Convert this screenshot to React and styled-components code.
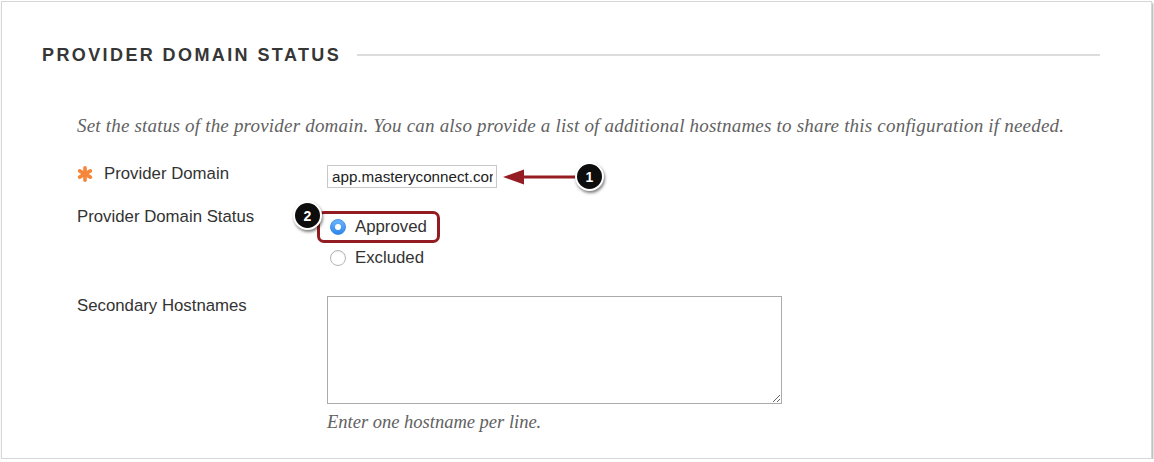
import React from 'react';
import styled, { createGlobalStyle } from 'styled-components';

const App = () => {
  return (
    <>
      <GlobalStyle />
      <Panel>
        <HeadingRow>
          <Heading>Provider Domain Status</Heading>
          <Rule />
        </HeadingRow>

        <Intro>
          Set the status of the provider domain. You can also provide a list of additional hostnames to share this configuration if needed.
        </Intro>

        <Form>
          <Row>
            <Label>
              <Asterisk viewBox="0 0 16 16">
                <g stroke="#f5863a" strokeWidth="3.6" strokeLinecap="round">
                  <line x1="8" y1="1.8" x2="8" y2="14.2" />
                  <line x1="2.6" y1="4.9" x2="13.4" y2="11.1" />
                  <line x1="2.6" y1="11.1" x2="13.4" y2="4.9" />
                </g>
              </Asterisk>
              Provider Domain
            </Label>
            <Control>
              <FieldWrap>
                <TextInput type="text" defaultValue="app.masteryconnect.com" />
                <Pointer>
                  <svg width="76" height="18" viewBox="0 0 76 18">
                    <polygon points="0,9 21,1.5 21,16.5" fill="#951c22" />
                    <rect x="19" y="7.5" width="57" height="3" fill="#951c22" />
                  </svg>
                  <Badge>1</Badge>
                </Pointer>
              </FieldWrap>
            </Control>
          </Row>

          <Row $gap={19}>
            <Label>Provider Domain Status</Label>
            <RadioGroup>
              <Option>
                <Radio $checked />
                Approved
                <Highlight>
                  <Badge $floating>2</Badge>
                </Highlight>
              </Option>
              <Option>
                <Radio />
                Excluded
              </Option>
            </RadioGroup>
          </Row>

          <Row $gap={28}>
            <Label>Secondary Hostnames</Label>
            <Control>
              <TextArea />
              <Hint>Enter one hostname per line.</Hint>
            </Control>
          </Row>
        </Form>
      </Panel>
    </>
  );
};

const GlobalStyle = createGlobalStyle`
  html, body {
    margin: 0;
    padding: 0;
    background: #ffffff;
    font-family: 'Liberation Sans', Arial, sans-serif;
    color: #333333;
  }
`;

const Panel = styled.section`
  box-sizing: border-box;
  width: 1151px;
  height: 458px;
  margin: 1px 0 0 1px;
  padding: 41px 51px 0 40px;
  background: #ffffff;
  border: 1px solid #d6d6d6;
  box-shadow: 1px 2px 2px rgba(0, 0, 0, 0.35);
`;

const HeadingRow = styled.div`
  display: flex;
  align-items: center;
  height: 24px;
`;

const Heading = styled.h2`
  margin: 0;
  font-size: 18px;
  font-weight: bold;
  letter-spacing: 2.4px;
  text-transform: uppercase;
  color: #363636;
  line-height: 24px;
  white-space: nowrap;
`;

const Rule = styled.div`
  flex: 1;
  height: 2px;
  margin-left: 16px;
  background: #dcdcdc;
`;

const Intro = styled.p`
  margin: 47px 0 0;
  padding-left: 35px;
  font-family: 'Liberation Serif', Georgia, serif;
  font-style: italic;
  font-size: 19px;
  letter-spacing: 0.2px;
  line-height: 24px;
  color: #626262;
  white-space: nowrap;
`;

const Form = styled.div`
  margin-top: 26px;
  padding-left: 35px;
`;

const Row = styled.div`
  display: grid;
  grid-template-columns: 250px 1fr;
  margin-top: ${(p) => p.$gap || 0}px;
`;

const Label = styled.div`
  display: flex;
  align-items: center;
  height: 20px;
  font-size: 16.8px;
  color: #333333;
`;

const Asterisk = styled.svg`
  width: 16px;
  height: 16px;
  margin: 0 11px 0 0;
`;

const Control = styled.div`
  display: flex;
  flex-direction: column;
  align-items: flex-start;
`;

const FieldWrap = styled.div`
  position: relative;
  margin-top: 1px;
`;

const TextInput = styled.input`
  box-sizing: border-box;
  width: 170px;
  height: 23px;
  padding: 0 3px 0 4px;
  border: 1px solid #c9c9c9;
  font-family: 'Liberation Sans', Arial, sans-serif;
  font-size: 15.2px;
  color: #222222;
  outline: none;
`;

const Pointer = styled.div`
  position: absolute;
  left: calc(100% + 6px);
  top: -3px;
  display: flex;
  align-items: center;

  svg {
    margin-right: -4px;
  }
`;

const Badge = styled.div`
  box-sizing: border-box;
  width: 29px;
  height: 29px;
  border-radius: 50%;
  background: #0d0d0d;
  border: 2px solid #ffffff;
  box-shadow: 1px 2px 3px rgba(0, 0, 0, 0.5);
  color: #ffffff;
  font-size: 14px;
  font-weight: bold;
  display: flex;
  align-items: center;
  justify-content: center;
  position: ${(p) => (p.$floating ? 'absolute' : 'relative')};
  left: ${(p) => (p.$floating ? '-27px' : 'auto')};
  top: ${(p) => (p.$floating ? '-13px' : 'auto')};
`;

const RadioGroup = styled.div`
  display: flex;
  flex-direction: column;
  align-items: flex-start;
  gap: 11px;
  padding-top: 10px;
`;

const Option = styled.label`
  position: relative;
  display: inline-flex;
  align-items: center;
  gap: 9px;
  height: 20px;
  margin-left: 3px;
  font-size: 16.8px;
  color: #333333;
`;

const Radio = styled.span`
  box-sizing: border-box;
  width: 16px;
  height: 16px;
  border-radius: 50%;
  display: flex;
  align-items: center;
  justify-content: center;
  background: ${(p) => (p.$checked ? 'linear-gradient(#6cb5fa, #2e86ec)' : '#ffffff')};
  border: 1px solid ${(p) => (p.$checked ? '#3b8fe6' : '#b5b5b5')};
  box-shadow: ${(p) => (p.$checked ? 'none' : 'inset 0 1px 1px rgba(0,0,0,0.08)')};

  &::after {
    content: '';
    display: ${(p) => (p.$checked ? 'block' : 'none')};
    width: 6px;
    height: 6px;
    border-radius: 50%;
    background: #ffffff;
  }
`;

const Highlight = styled.span`
  position: absolute;
  inset: -6px -13px;
  border: 3px solid #931c22;
  border-radius: 7px;
  pointer-events: none;
`;

const TextArea = styled.textarea`
  box-sizing: border-box;
  width: 455px;
  height: 108px;
  border: 1px solid #ababab;
  resize: both;
  outline: none;
  font-family: 'Liberation Sans', Arial, sans-serif;
`;

const Hint = styled.div`
  margin-top: 8px;
  font-family: 'Liberation Serif', Georgia, serif;
  font-style: italic;
  font-size: 18.5px;
  line-height: 20px;
  color: #626262;
`;

export default App;
